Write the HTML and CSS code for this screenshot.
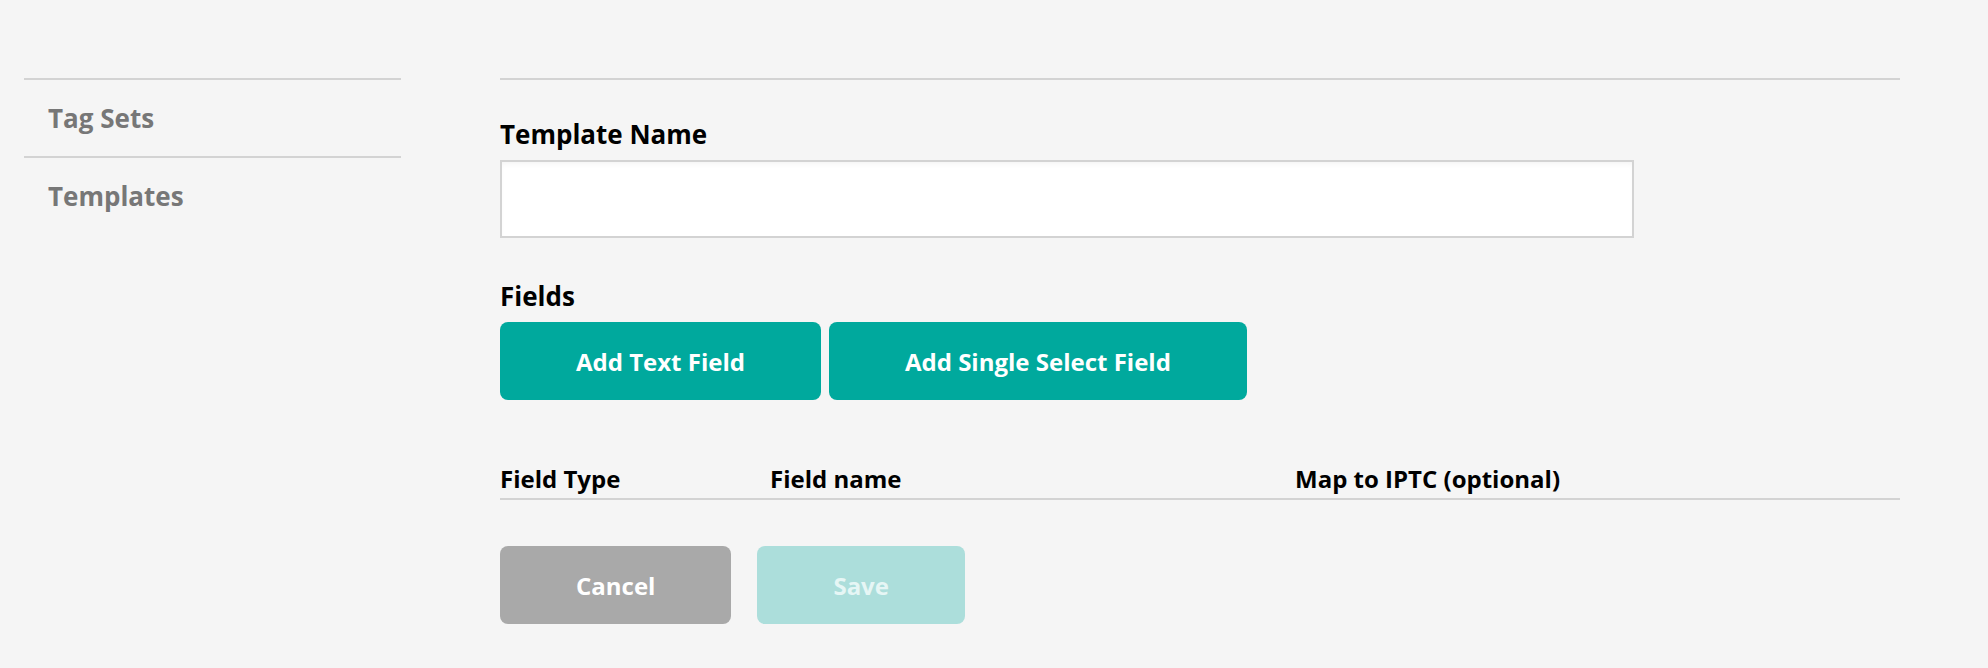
FILE: index.html
```html
<!DOCTYPE html>
<html lang="en">
<head>
<meta charset="utf-8">
<title>Templates</title>
<link rel="stylesheet" href="styles.css">
</head>
<body>
<div class="page">
  <nav class="sidebar">
    <a class="nav-item" href="#">Tag Sets</a>
    <a class="nav-item" href="#">Templates</a>
  </nav>
  <main class="content">
    <form class="form">
      <label class="label" for="tpl-name">Template Name</label>
      <input class="text-input" id="tpl-name" type="text">
      <div class="label fields-label">Fields</div>
      <div class="btn-row">
        <button type="button" class="btn btn-primary">Add Text Field</button>
        <button type="button" class="btn btn-primary">Add Single Select Field</button>
      </div>
      <div class="table-head">
        <span class="col">Field Type</span>
        <span class="col">Field name</span>
        <span class="col">Map to IPTC (optional)</span>
      </div>
      <div class="actions">
        <button type="button" class="btn btn-cancel">Cancel</button>
        <button type="button" class="btn btn-save" disabled>Save</button>
      </div>
    </form>
  </main>
</div>
</body>
</html>
```
FILE: styles.css
```css
* { box-sizing: border-box; }
html, body {
  margin: 0;
  padding: 0;
  background: #f5f5f5;
  font-family: "Open Sans", "Liberation Sans", sans-serif;
  font-weight: 700;
}
.page {
  display: flex;
  padding: 78px 88px 0 24px;
  gap: 99px;
}
.sidebar {
  width: 377px;
  flex: none;
  display: flex;
  flex-direction: column;
}
.nav-item {
  display: flex;
  align-items: center;
  height: 78px;
  border-top: 2px solid #d3d3d3;
  padding-left: 24px;
  color: #777777;
  font-size: 26px;
  line-height: 35px;
  text-decoration: none;
}
.content {
  flex: 1;
  border-top: 2px solid #d3d3d3;
}
.form {
  display: flex;
  flex-direction: column;
  align-items: flex-start;
  padding-top: 37px;
  margin: 0;
}
.label {
  display: block;
  color: #000;
  font-size: 26px;
  line-height: 35px;
  margin-bottom: 8px;
}
.text-input {
  width: 1134px;
  height: 78px;
  border: 2px solid #d3d3d3;
  background: #fff;
  box-shadow: inset 0 4px 6px -3px rgba(0,0,0,0.06);
  outline: none;
  margin: 0;
}
.fields-label { margin-top: 41px; }
.btn-row {
  display: flex;
  gap: 8px;
}
.btn {
  height: 78px;
  border: none;
  border-radius: 8px;
  padding: 0 76px;
  font-family: "Open Sans", "Liberation Sans", sans-serif;
  font-weight: 700;
  font-size: 24px;
  color: #fff;
  cursor: pointer;
}
.btn-primary { background: #00a99d; }
.table-head {
  align-self: stretch;
  display: grid;
  grid-template-columns: 270px 525px 1fr;
  margin-top: 62px;
  padding-bottom: 3px;
  border-bottom: 2px solid #d3d3d3;
  font-size: 24px;
  line-height: 33px;
  color: #000;
}
.actions {
  display: flex;
  gap: 26px;
  margin-top: 46px;
}
.btn-cancel { background: #a9a9a9; }
.btn-save {
  background: #acdedb;
  color: #e6f6f5;
  cursor: default;
}
```
